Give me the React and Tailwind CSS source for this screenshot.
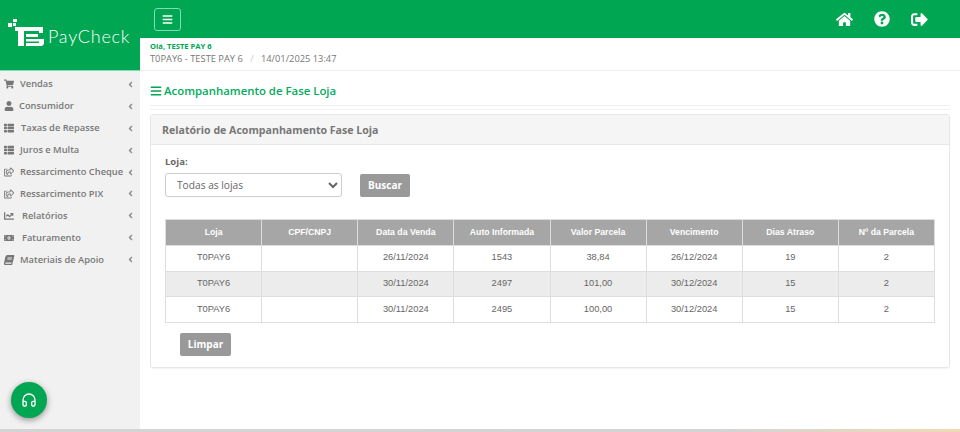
import { Headphones } from "lucide-react";
import { FaAngleLeft, FaBars, FaBook, FaChartLine, FaHome, FaMoneyBillAlt, FaQuestionCircle, FaRegShareSquare, FaShoppingCart, FaSignOutAlt, FaThList, FaUser } from "react-icons/fa";

const menu = [
  { label: "Vendas", icon: FaShoppingCart, slot: "w-[16px]" },
  { label: "Consumidor", icon: FaUser, slot: "w-[15px]" },
  { label: "Taxas de Repasse", icon: FaThList, slot: "w-[17px]" },
  { label: "Juros e Multa", icon: FaThList, slot: "w-[16px]" },
  { label: "Ressarcimento Cheque", icon: FaRegShareSquare, slot: "w-[16px]" },
  { label: "Ressarcimento PIX", icon: FaRegShareSquare, slot: "w-[16px]" },
  { label: "Relatórios", icon: FaChartLine, slot: "w-[18px]" },
  { label: "Faturamento", icon: FaMoneyBillAlt, slot: "w-[18px]" },
  { label: "Materiais de Apoio", icon: FaBook, slot: "w-[16px]", iconClass: "-skew-x-12" }
];

const columns = ["Loja", "CPF/CNPJ", "Data da Venda", "Auto Informada", "Valor Parcela", "Vencimento", "Dias Atraso", "Nº da Parcela"];

const rows = [
  ["T0PAY6", "", "26/11/2024", "1543", "38,84", "26/12/2024", "19", "2"],
  ["T0PAY6", "", "30/11/2024", "2497", "101,00", "30/12/2024", "15", "2"],
  ["T0PAY6", "", "30/11/2024", "2495", "100,00", "30/12/2024", "15", "2"]
];

function Logo() {
  return <svg width="36" height="27" viewBox="0 0 36 27" className="shrink-0" fill="#fff">
      <rect x="5" y="0" width="4" height="3" />
      <rect x="0" y="4" width="4" height="4" />
      <rect x="5" y="4" width="3" height="3" />
      <path d="M7 8h28v6h-4v-2H16v15h-6V12H7z" />
      <rect x="18" y="15" width="12" height="3" />
      <path d="M18 20h18v5l-2 2H18v-3h13v-1.5H18z" />
    </svg>;
}

export default function App() {
  return <div className="relative flex h-[432px] w-[960px] overflow-hidden bg-white font-['Open_Sans',sans-serif]">
      <aside className="flex w-[140px] shrink-0 flex-col bg-[#f1f1f1]">
        <div className="flex h-[71px] shrink-0 items-start border-b border-[#7fdcb6] bg-[#00a651] pl-[8px] pt-[19px]">
          <Logo />
          <span className="ml-[4px] mt-[3px] font-['Lato',sans-serif] text-[18px] leading-[28px] font-light tracking-[0.75px] text-white">PayCheck</span>
        </div>
        <nav className="flex flex-col pt-[2.5px]">
          {menu.map(item => <div key={item.label} className="flex h-[21.9px] items-center pl-[4px] pr-[5px] text-[9.3px] font-semibold text-[#777]">
              <span className={`flex shrink-0 items-center ${item.slot}`}>
                <item.icon className={`size-[10px] text-[#777] ${item.iconClass ?? ""}`} />
              </span>
              <span className="flex-1 whitespace-nowrap">{item.label}</span>
              <FaAngleLeft className="size-[9px] shrink-0 text-[#888]" />
            </div>)}
        </nav>
      </aside>

      <div className="flex min-w-0 flex-1 flex-col">
        <header className="flex h-[38px] shrink-0 items-center justify-between bg-[#00a651] pl-[14px] pr-[32px]">
          <button className="flex h-[23px] w-[27px] items-center justify-center rounded-[3px] border border-[#7fdcb6] text-white">
            <FaBars className="size-[11px]" />
          </button>
          <div className="flex items-center gap-[21px] text-white">
            <FaHome className="size-[17px]" />
            <FaQuestionCircle className="size-[16px]" />
            <FaSignOutAlt className="size-[17px]" />
          </div>
        </header>

        <div className="flex h-[33px] shrink-0 flex-col justify-center border-b border-[#eee] pb-[2px] pl-[10px]">
          <p className="text-[7.6px] leading-[11px] font-bold text-[#00a651]">Olá, TESTE PAY 6</p>
          <p className="text-[9.3px] leading-[14px] text-[#777]">
            T0PAY6 - TESTE PAY 6 <span className="mx-[5px] text-[#ccc]">/</span> 14/01/2025 13:47
          </p>
        </div>

        <main className="px-[10px] pt-[10px]">
          <div className="flex h-[25px] items-center gap-[2px] border-b border-[#eee] pb-[4px]">
            <FaBars className="size-[12px] text-[#00a651]" />
            <h1 className="text-[11.4px] font-semibold text-[#00ab5c]">Acompanhamento de Fase Loja</h1>
          </div>
          <div className="mt-[3px] border-t border-[#f3f3f3]" />

          <section className="mt-[4px] h-[254px] w-[800px] rounded-[3px] border border-[#e7e7e7] shadow-[0_1px_1px_rgba(0,0,0,0.05)]">
            <div className="flex h-[30px] items-center border-b border-[#e7e7e7] bg-[#f5f5f5] pl-[11px] pt-[3px] text-[10.6px] font-bold text-[#777]">
              Relatório de Acompanhamento Fase Loja
            </div>
            <div className="pl-[14px] pt-[10px]">
              <label className="block text-[9.5px] leading-[14px] font-bold text-[#666]">Loja:</label>
              <div className="mt-[4px] flex items-center gap-[18px]">
                <select className="h-[24px] w-[177px] rounded-[3px] border border-[#ccc] bg-white pl-[7px] text-[10.2px] text-[#666]" defaultValue="todas">
                  <option value="todas">Todas as lojas</option>
                </select>
                <button className="h-[23px] w-[50px] rounded-[2px] bg-[#999] text-[10px] font-bold text-white">Buscar</button>
              </div>

              <table className="mt-[22px] w-[770px] table-fixed border-collapse font-['Liberation_Sans',sans-serif] text-[9.3px] text-[#666]">
                <thead>
                  <tr className="h-[26px] bg-[#a6a6a6] text-[8.7px] text-white">
                    {columns.map(col => <th key={col} className="border border-[#ddd] font-bold">{col}</th>)}
                  </tr>
                </thead>
                <tbody>
                  {rows.map((row, i) => <tr key={i} className={`h-[25.6px] ${i === 1 ? "bg-[#ececec]" : "bg-white"}`}>
                      {row.map((cell, j) => <td key={j} className="border border-[#ddd] p-0 text-center">{cell}</td>)}
                    </tr>)}
                </tbody>
              </table>

              <button className="ml-[15px] mt-[10px] h-[23px] w-[51px] rounded-[2px] bg-[#999] text-[10px] font-bold text-white">Limpar</button>
            </div>
          </section>
        </main>
      </div>

      <button className="absolute bottom-[14px] left-[11px] flex size-[36px] items-center justify-center rounded-full bg-[#00a651] text-white shadow-[0_2px_6px_rgba(0,0,0,0.4)]">
        <Headphones className="size-[16px]" />
      </button>
      <div className="absolute bottom-0 left-0 h-[3px] w-full bg-linear-to-r from-[#d4d4d4] from-75% to-[#f0d9b5]" />
    </div>;
}
